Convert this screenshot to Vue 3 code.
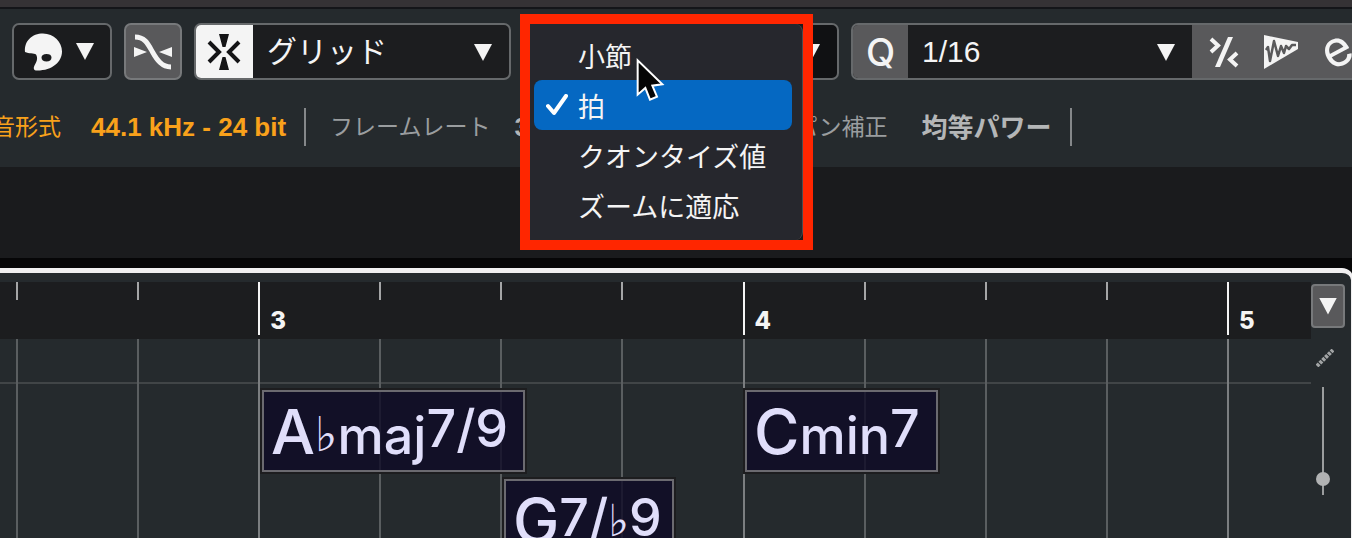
<template>
	<div class="app">
		<header class="header">
			<div class="toolbar">
				<button class="tool edge" aria-label="ツール"></button>
				<button class="tool palette" aria-label="カラー">
					<svg width="38" height="38" viewBox="0 0 38 38">
						<path
							fill="#f4f4f4"
							fill-rule="evenodd"
							d="M1 19C0 8 8 .5 19 .5S38 9 38 18.500C38 29 28 38 12 37.500C9 37 9.500 34 11 31.500C13 28 14 25 12 21.500C10 20 5 21 1 19ZM17.500 24.500C17.500 27 19.500 28.500 22.500 28.500S27.500 27 27.500 24.500S25.500 21 22.500 21S17.500 22.500 17.500 24.500Z"
						/>
					</svg>
					<span class="arrow"></span>
				</button>
				<button class="tool square" aria-label="クロスフェード">
					<svg width="40" height="38" viewBox="0 0 40 38">
						<path
							d="M2 4C12 4 15 11 19.500 19S29 34 38 34"
							fill="none"
							stroke="#f4f4f4"
							stroke-width="5"
						/>
						<path fill="#f4f4f4" d="M1 14L14 19L1 24ZM39 14L26 19L39 24Z" />
					</svg>
				</button>
				<div class="combo">
					<button class="snap" aria-label="スナップタイプ">
						<svg width="34" height="36" viewBox="0 0 34 36">
							<path fill="#141416" d="M12 0H22L18.500 13H15.500ZM12 36H22L18.500 23H15.500Z" />
							<path
								d="M2 8L12 18L2 28M32 8L22 18L32 28"
								fill="none"
								stroke="#141416"
								stroke-width="4"
							/>
						</svg>
					</button>
					<div class="field">
						<select aria-label="スナップ">
							<option>グリッド</option>
						</select>
						<span class="arrow"></span>
					</div>
				</div>
				<div class="combo dark">
					<div class="field">
						<select aria-label="グリッドの種類">
							<option>拍</option>
						</select>
						<span class="arrow"></span>
					</div>
				</div>
				<div class="combo quantize">
					<button class="q">Q</button>
					<div class="field">
						<select aria-label="クオンタイズ">
							<option>1/16</option>
						</select>
						<span class="arrow"></span>
					</div>
					<div class="actions">
						<button aria-label="ソフトクオンタイズ">
							<svg width="30" height="32" viewBox="0 0 30 32">
								<path
									d="M2 3L9 9.500L2 16M28 17L21 23.500L28 30"
									fill="none"
									stroke="#f4f4f4"
									stroke-width="4"
								/>
								<path fill="#f4f4f4" d="M19 1H24L11 31H6Z" />
							</svg>
						</button>
						<button aria-label="オーディオクオンタイズ">
							<svg width="36" height="36" viewBox="0 0 36 36">
								<path fill="#f4f4f4" d="M1 1L35 8V15L1 35Z" />
								<path
									d="M3 16L5 13L7 27L11 7L15 22L18 12L21 19L23 12L26 15L29 11H33"
									fill="none"
									stroke="#59595b"
									stroke-width="2.500"
									stroke-linejoin="round"
								/>
							</svg>
						</button>
						<button aria-label="クオンタイズパネル"><span class="e">e</span></button>
					</div>
				</div>
			</div>
			<div class="info">
				<span class="label first on">音形式</span>
				<strong class="on">44.1 kHz - 24 bit</strong>
				<i class="rule"></i>
				<span class="label">フレームレート</span>
				<strong class="frame">30</strong>
				<span class="label">パン補正</span>
				<strong class="pan">均等パワー</strong>
				<i class="rule"></i>
			</div>
		</header>

		<div class="overview"></div>

		<main class="project">
			<section class="timeline">
				<div class="ruler beats">
					<div v-for="n in 11" :key="n" :class="['tick', { bar: isBar(n) }]">
						<b v-if="isBar(n)">{{ barNumber(n) }}</b>
					</div>
				</div>
				<div class="tracks">
					<div class="lines beats">
						<i v-for="n in 11" :key="n" :class="{ bar: isBar(n) }"></i>
					</div>
					<div class="lane"></div>
					<div v-for="c in chords" :key="c.id" :class="['chord', c.id]">
						<span class="root">{{ c.root }}</span>
						<span v-if="c.flat" class="flat">♭</span>
						<span v-if="c.quality" class="quality">{{ c.quality }}</span>
						<span class="tension">{{ c.tension }}</span>
						<template v-if="c.alt">
							<span class="flat">♭</span>
							<span class="tension">{{ c.alt }}</span>
						</template>
					</div>
				</div>
			</section>
			<aside class="side">
				<button class="more" aria-label="ルーラーメニュー"><span class="arrow"></span></button>
				<svg width="18" height="18" viewBox="0 0 18 18">
					<path d="M1 17L17 1" stroke="#a2a4a5" stroke-width="4" stroke-dasharray="3 1" />
				</svg>
				<input v-model="zoom" type="range" min="0" max="100" aria-label="ズーム" />
			</aside>
		</main>

		<div class="popup">
			<ul class="menu">
				<li v-for="item in items" :key="item">
					<button :class="{ selected: item === current }" @click="current = item">
						<span class="check">
							<svg v-if="item === current" width="22" height="22" viewBox="0 0 22 22">
								<path
									d="M2 12L8 19L20 2"
									fill="none"
									stroke="#fff"
									stroke-width="4"
									stroke-linecap="round"
									stroke-linejoin="round"
								/>
							</svg>
						</span>
						{{ item }}
					</button>
				</li>
			</ul>
		</div>
		<svg class="cursor" width="30" height="46" viewBox="0 0 90 138">
			<path
				d="M8 10V113L31 93L45 128L66 119L52 86L82 82Z"
				fill="#050505"
				stroke="#fff"
				stroke-width="6"
			/>
		</svg>
	</div>
</template>

<script setup>
import { ref } from "vue";

const items = ["小節", "拍", "クオンタイズ値", "ズームに適応"];
const current = ref("拍");
const zoom = ref(10);

const chords = [
	{ id: "a-flat", root: "A", flat: true, quality: "maj", tension: "7/9" },
	{ id: "c-min", root: "C", quality: "min", tension: "7" },
	{ id: "g-seven", root: "G", tension: "7/", alt: "9" },
];

// four beats to a bar, the third visible tick starts bar 3
const isBar = (n) => n % 4 === 3;
const barNumber = (n) => (n + 9) / 4;
</script>

<style>
body {
	margin: 0;
	background: #252a2d;
}
</style>

<style scoped>
.app {
	position: relative;
	display: flex;
	flex-direction: column;
	height: 100vh;
	overflow: hidden;
	background: #060607;
	color: #f4f4f4;
	font-family: "Liberation Sans", "Noto Sans CJK JP", sans-serif;
}
button,
select {
	box-sizing: border-box;
	margin: 0;
	padding: 0;
	border: 0;
	background: none;
	color: inherit;
	font: inherit;
}
svg {
	display: block;
	flex: none;
}
.arrow {
	flex: none;
	width: 18px;
	height: 17px;
	background: #f4f4f4;
	clip-path: polygon(0 0, 100% 0, 50% 100%);
}

.header {
	flex: none;
	border-top: 7px solid #353235;
	background: #252a2d;
	box-shadow: inset 0 2px #141519;
}
.toolbar {
	display: flex;
	gap: 12px;
	padding-top: 16px;
}
.tool {
	display: flex;
	flex: none;
	align-items: center;
	justify-content: center;
	height: 57px;
	border: 2px solid #66696b;
	border-radius: 7px;
	background: #1b1c1e;
}
.tool.edge {
	width: 12px;
	margin-left: -12px;
}
.tool.palette {
	gap: 14px;
	width: 100px;
	padding-right: 6px;
}
.tool.square {
	width: 58px;
	border-color: #77797b;
	background: #59595b;
}
.combo {
	box-sizing: border-box;
	display: flex;
	flex: none;
	width: 317px;
	height: 57px;
	overflow: hidden;
	border: 2px solid #66696b;
	border-radius: 7px;
	background: #1c1d1f;
}
.combo.dark {
	width: 316px;
	background: #101113;
}
.combo.quantize {
	flex: 1;
	width: auto;
	margin-right: -16px;
}
.snap {
	display: flex;
	flex: none;
	align-items: center;
	justify-content: center;
	width: 59px;
	margin: -2px 0 -2px -2px;
	background: #f4f4f4;
}
.q {
	flex: none;
	width: 55px;
	background: #59595b;
	font-family: Inter, sans-serif;
	font-size: 38px;
	font-weight: 500;
	line-height: 48px;
}
.field {
	position: relative;
	display: flex;
	flex: 1;
}
.field select {
	flex: 1;
	padding-left: 14px;
	appearance: none;
	font-size: 30px;
}
.field .arrow {
	position: absolute;
	top: 19px;
	right: 17px;
	pointer-events: none;
}
.actions {
	display: flex;
	flex: none;
	padding-left: 3px;
	background: #59595b;
}
.actions button {
	display: flex;
	align-items: center;
	justify-content: center;
	width: 57px;
}
.e {
	padding-bottom: 8px;
	font-family: Inter, sans-serif;
	font-size: 50px;
	line-height: 36px;
	transform: rotate(-28deg);
}

.info {
	display: flex;
	align-items: center;
	height: 40px;
	padding: 27px 0 20px;
	color: #b4b6b7;
	font-size: 26px;
	white-space: nowrap;
}
.label {
	padding-bottom: 4px;
	color: #9a9d9f;
	font-size: 23px;
}
.label.first {
	margin: 0 30px 0 -8px;
}
.info .on {
	color: #f9a11b;
}
.rule {
	width: 2px;
	height: 38px;
	margin: 0 24px 0 18px;
	background: #85888a;
}
.frame {
	width: 280px;
	margin-left: 24px;
}
.pan {
	margin-left: 34px;
	padding-bottom: 4px;
}

.overview {
	flex: none;
	height: 91px;
	margin-bottom: 10px;
	background: #1a1b1d;
}

.project {
	display: flex;
	flex: 1;
	min-height: 0;
	margin-right: -2px;
	border-top: 5px solid #f0eff0;
	border-right: 3px solid #f0eff0;
	border-radius: 0 12px 0 0;
	background: #252a2d;
}
.timeline {
	display: flex;
	flex: 1;
	flex-direction: column;
	margin-top: 9px;
}
.beats {
	display: grid;
	grid-template-columns: 16px repeat(10, 121fr) 84fr;
}
.beats > :first-child {
	grid-column-start: 2;
}
.ruler {
	height: 57px;
	background: #1c1d1f;
}
.tick {
	box-sizing: border-box;
	height: 18px;
	border-left: 2px solid #a4a5a6;
}
.tick.bar {
	height: 53px;
	padding: 24px 0 0 10px;
	border-color: #f4f4f4;
	font-family: Inter, sans-serif;
	font-size: 24px;
	line-height: 30px;
}
.tick b {
	font-weight: 800;
}
.tracks {
	position: relative;
	flex: 1;
}
.lines {
	position: absolute;
	inset: 0;
}
.lines i {
	border-left: 2px solid #5a5e60;
}
.lines .bar {
	border-color: #7b7e80;
}
.lane {
	height: 43px;
	border-bottom: 2px solid #414547;
}
.chord {
	position: absolute;
	box-sizing: border-box;
	display: flex;
	align-items: baseline;
	height: 82px;
	padding: 4px 7px;
	border: 2px solid #6b6a70;
	background: rgba(14, 10, 38, 0.8);
	box-shadow: 0 0 0 2px #1d1d1f;
	color: #e0defa;
	font-family: Inter, sans-serif;
	font-size: 52px;
	font-weight: 500;
	line-height: 72px;
	white-space: nowrap;
}
.chord.a-flat {
	top: 51px;
	left: 262px;
	width: 263px;
}
.chord.c-min {
	top: 51px;
	left: 745px;
	width: 193px;
}
.chord.g-seven {
	top: 140px;
	left: 504px;
	width: 170px;
}
.root {
	font-size: 62px;
}
.flat {
	position: relative;
	bottom: 3px;
	font-family: "DejaVu Sans", sans-serif;
	font-size: 48px;
}
.tension {
	position: relative;
	bottom: 7px;
}
.tension + .flat {
	bottom: 7px;
	font-size: 44px;
}

.side {
	display: flex;
	flex: none;
	flex-direction: column;
	align-items: center;
	width: 34px;
	padding: 11px 6px 0 0;
}
.more {
	display: flex;
	align-items: center;
	justify-content: center;
	width: 34px;
	height: 44px;
	margin-bottom: 21px;
	border: 2px solid #77797b;
	border-radius: 4px;
	background: #59595b;
}
.side svg {
	margin-right: 6px;
}
.side input {
	width: 14px;
	height: 108px;
	margin: 20px 10px 0 0;
	appearance: none;
	background: linear-gradient(#9b9d9e, #9b9d9e) center / 2px 100% no-repeat;
	direction: rtl;
	writing-mode: vertical-lr;
}
.side input::-webkit-slider-thumb {
	width: 14px;
	height: 14px;
	border-radius: 50%;
	appearance: none;
	background: #b1b2b3;
}

.popup {
	position: absolute;
	top: 14px;
	left: 520px;
	border: 10px solid #ff2600;
	background: #1a1b1d;
}
.menu {
	box-sizing: border-box;
	width: 273px;
	margin: 0;
	padding: 6px 10px 10px 4px;
	border-right: 1px solid #4a4b50;
	border-radius: 0 8px 8px 0;
	background: #26272d;
	list-style: none;
}
.menu button {
	display: flex;
	align-items: center;
	width: 100%;
	height: 50px;
	padding-left: 12px;
	border-radius: 8px;
	font-size: 27px;
}
.menu .selected {
	background: #0568c2;
}
.check {
	width: 32px;
}
.cursor {
	position: absolute;
	top: 57px;
	left: 635px;
}
</style>
